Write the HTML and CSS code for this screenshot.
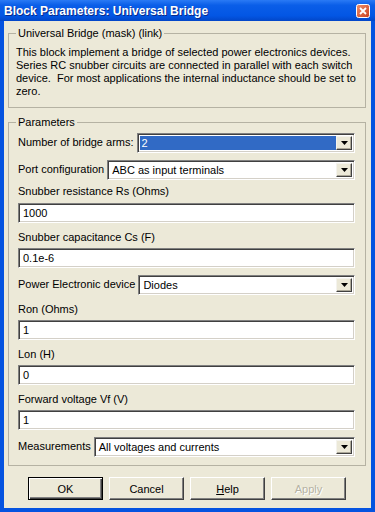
FILE: index.html
```html
<!DOCTYPE html>
<html>
<head>
    <title>Block Parameters: Universal Bridge</title>
    <link rel="stylesheet" href="styles.css">
</head>
<body>
    <div class="window">
        <div class="titlebar">
            <span class="title">Block Parameters: Universal Bridge</span>
            <span class="close">
                <svg width="14" height="14" viewBox="0 0 14 14">
                    <defs>
                        <linearGradient id="cg" x1="0" y1="0" x2="1" y2="1">
                            <stop offset="0" stop-color="#f0906a"/>
                            <stop offset="1" stop-color="#c9401f"/>
                        </linearGradient>
                    </defs>
                    <rect x="0.5" y="0.5" width="13" height="13" rx="2" fill="url(#cg)" stroke="#fff"/>
                    <path d="M4 4 L10 10 M10 4 L4 10" stroke="#fff" stroke-width="1.8"/>
                </svg>
            </span>
        </div>
        <div class="client">
            <fieldset class="group desc">
                <legend>Universal Bridge (mask) (link)</legend>
                <p>This block implement a bridge of selected power electronics devices. Series RC snubber circuits are connected in parallel with each switch device.&nbsp; For most applications the internal inductance should be set to zero.</p>
            </fieldset>

            <fieldset class="group params">
                <legend>Parameters</legend>

                <div class="row inline">
                    <label>Number of bridge arms:</label>
                    <div class="combo selected">
                        <span class="value">2</span>
                        <span class="drop"><svg width="7" height="4" viewBox="0 0 7 4"><path d="M0 0 H7 L3.5 4 Z" fill="#000"/></svg></span>
                    </div>
                </div>
                <div class="row inline tight">
                    <label>Port configuration</label>
                    <div class="combo">
                        <span class="value">ABC as input terminals</span>
                        <span class="drop"><svg width="7" height="4" viewBox="0 0 7 4"><path d="M0 0 H7 L3.5 4 Z" fill="#000"/></svg></span>
                    </div>
                </div>
                <div class="row stack first">
                    <label>Snubber resistance Rs (Ohms)</label>
                    <div class="field">1000</div>
                </div>
                <div class="row stack">
                    <label>Snubber capacitance Cs (F)</label>
                    <div class="field">0.1e-6</div>
                </div>
                <div class="row inline">
                    <label>Power Electronic device</label>
                    <div class="combo">
                        <span class="value">Diodes</span>
                        <span class="drop"><svg width="7" height="4" viewBox="0 0 7 4"><path d="M0 0 H7 L3.5 4 Z" fill="#000"/></svg></span>
                    </div>
                </div>
                <div class="row stack">
                    <label>Ron (Ohms)</label>
                    <div class="field">1</div>
                </div>
                <div class="row stack">
                    <label>Lon (H)</label>
                    <div class="field">0</div>
                </div>
                <div class="row stack">
                    <label>Forward voltage Vf (V)</label>
                    <div class="field">1</div>
                </div>
                <div class="row inline last">
                    <label>Measurements</label>
                    <div class="combo">
                        <span class="value">All voltages and currents</span>
                        <span class="drop"><svg width="7" height="4" viewBox="0 0 7 4"><path d="M0 0 H7 L3.5 4 Z" fill="#000"/></svg></span>
                    </div>
                </div>
            </fieldset>

            <div class="buttons">
                <button class="btn default">OK</button>
                <button class="btn">Cancel</button>
                <button class="btn"><u>H</u>elp</button>
                <button class="btn disabled">Apply</button>
            </div>
        </div>
    </div>
</body>
</html>
```

FILE: styles.css
```css
* {
    box-sizing: border-box;
}
body {
    margin: 0;
    font-family: "Liberation Sans", Arial, sans-serif;
    font-size: 11px;
    color: #000;
    background: #fff;
}
.window {
    width: 375px;
    height: 512px;
    display: flex;
    flex-direction: column;
    background: #0553e0;
}
.titlebar {
    height: 21px;
    display: flex;
    align-items: center;
    justify-content: space-between;
    padding: 0 5px 0 4px;
    background: linear-gradient(#2a7af5, #0a5ee8 25%, #0356e4 75%, #0246c8);
}
.title {
    color: #fff;
    font-weight: bold;
    font-size: 12px;
    text-shadow: 1px 1px #0a2a8a;
}
.close {
    display: flex;
}
.client {
    flex: 1;
    margin: 0 4px 4px 4px;
    padding: 0 5px 0 4px;
    background: #ece9d8;
    display: flex;
    flex-direction: column;
}
.group {
    margin: 0;
    border: 1px solid #b5b2a3;
}
.group legend {
    padding: 0 2px;
    line-height: 13px;
}
.desc {
    margin-top: 6px;
    padding: 6px 8px 9px 7px;
}
.desc p {
    margin: 0;
    line-height: 13px;
}
.params {
    margin-top: 8px;
    padding: 4px 10px 8px 9px;
}
.params legend {
    margin-left: -2px;
}
.row {
    margin-bottom: 7px;
}
.row.tight {
    margin-bottom: 4px;
}
.row.last {
    margin-bottom: 0;
}
.row.inline {
    display: flex;
    align-items: center;
    gap: 3px;
}
.row.inline label {
    white-space: nowrap;
    margin-top: -2px;
}
.row.stack label {
    display: block;
    line-height: 14px;
    margin-bottom: 4px;
}
.row.first label {
    margin-bottom: 5px;
}
.combo, .field {
    height: 20px;
    background: #fff;
    border: 1px solid;
    border-color: #808080 #fff #fff #808080;
    box-shadow: inset 1px 1px #404040, inset -1px -1px #d4d0c8;
}
.combo {
    flex: 1;
    display: flex;
    padding: 2px;
}
.combo .value {
    flex: 1;
    padding-left: 2px;
    line-height: 14px;
}
.combo.selected .value {
    background: #316ac5;
    color: #fff;
}
.combo .drop {
    width: 16px;
    background: #ece9d8;
    border: 1px solid;
    border-color: #f4f3ee #404040 #404040 #f4f3ee;
    box-shadow: inset -1px -1px #aca899;
    display: flex;
    align-items: center;
    justify-content: center;
}
.field {
    padding: 2px 4px;
    line-height: 14px;
}
.buttons {
    display: flex;
    justify-content: center;
    gap: 6px;
    margin-top: 11px;
}
.btn {
    width: 75px;
    height: 23px;
    padding: 0;
    font-family: inherit;
    font-size: 11px;
    color: #000;
    background: #ece9d8;
    border: 1px solid;
    border-color: #fff #404040 #404040 #fff;
    box-shadow: inset -1px -1px #808080;
}
.btn.default {
    border-color: #000;
    box-shadow: inset 1px 1px #fff, inset -1px -1px #404040, inset -2px -2px #808080;
}
.btn.disabled {
    color: #b5b2a3;
    text-shadow: 1px 1px #fff;
}
```
